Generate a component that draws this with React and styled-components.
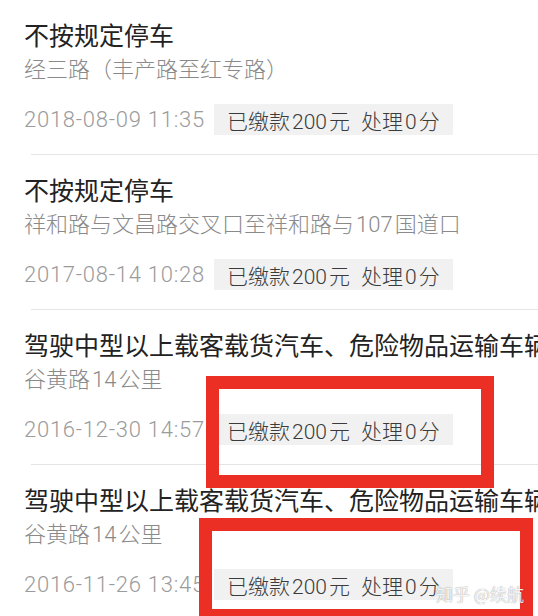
import React from 'react';
import styled, { createGlobalStyle } from 'styled-components';

const GlobalStyle = createGlobalStyle`
  html, body {
    margin: 0;
    padding: 0;
    background: #fff;
  }
  body {
    font-family: Roboto, "Noto Sans CJK SC", sans-serif;
  }
`;

const Page = styled.div`
  position: relative;
  width: 538px;
  height: 616px;
  overflow: hidden;
  background: #fff;
`;

const Item = styled.div`
  padding-top: 19px;
`;

const Content = styled.div`
  padding-left: 24px;
`;

const Title = styled.div`
  font-family: "Noto Sans CJK SC", sans-serif;
  font-size: 25px;
  line-height: 30px;
  color: #222;
  white-space: nowrap;
`;

const Place = styled.div`
  margin-top: 6px;
  font-family: Roboto, "Noto Sans CJK SC", sans-serif;
  font-size: 22px;
  font-weight: 300;
  line-height: 30px;
  color: #8a8a8a;
  white-space: nowrap;
`;

const Meta = styled.div`
  display: flex;
  align-items: center;
  height: 31px;
  margin-top: 19px;
`;

const Time = styled.span`
  font-family: Roboto, sans-serif;
  font-size: 22px;
  font-weight: 300;
  letter-spacing: 0.75px;
  color: #9b9b9b;
`;

const Badge = styled.div`
  display: flex;
  align-items: center;
  gap: 11px;
  height: 31px;
  margin-left: 9px;
  padding: 0 13px;
  background: #f1f1f1;
  font-size: 21px;
  font-weight: 300;
  color: #3b3b3b;
`;

const Num = styled.span`
  margin: 0 2px;
`;

const Divider = styled.div`
  height: 1px;
  margin: 19px 0 0 31px;
  background: #e4e4e4;
`;

// red marks drawn over the screenshot
const Mark = styled.div`
  position: absolute;
  left: ${(p) => p.$left}px;
  top: ${(p) => p.$top}px;
  width: ${(p) => p.$width}px;
  height: ${(p) => p.$height}px;
  box-sizing: border-box;
  border: 13px solid #ec2f24;
`;

const Watermark = styled.div`
  position: absolute;
  left: 436px;
  top: 581px;
  font-family: "Noto Sans CJK SC", sans-serif;
  font-size: 17px;
  color: rgba(255, 255, 255, 0.92);
  text-shadow: 0 0 1px rgba(0, 0, 0, 0.5);
  white-space: nowrap;
`;

const withNums = (text) =>
  text.split(/(\d+)/).map((part, i) =>
    /^\d+$/.test(part) ? <Num key={i}>{part}</Num> : part
  );

const longTitle = '驾驶中型以上载客载货汽车、危险物品运输车辆';

const records = [
  { title: '不按规定停车', place: '经三路（丰产路至红专路）', time: '2018-08-09 11:35' },
  { title: '不按规定停车', place: '祥和路与文昌路交叉口至祥和路与107国道口', time: '2017-08-14 10:28' },
  { title: longTitle, place: '谷黄路14公里', time: '2016-12-30 14:57' },
  { title: longTitle, place: '谷黄路14公里', time: '2016-11-26 13:45' },
];

export default function App() {
  return (
    <Page>
      <GlobalStyle />
      {records.map((r, i) => (
        <Item key={i}>
          <Content>
            <Title>{r.title}</Title>
            <Place>{withNums(r.place)}</Place>
            <Meta>
              <Time>{r.time}</Time>
              <Badge>
                <span>已缴款{withNums('200')}元</span>
                <span>处理{withNums('0')}分</span>
              </Badge>
            </Meta>
          </Content>
          <Divider />
        </Item>
      ))}
      <Mark $left={206} $top={376} $width={288} $height={112} />
      <Mark $left={199} $top={518} $width={334} $height={104} />
      <Watermark>知乎 @续航</Watermark>
    </Page>
  );
}
